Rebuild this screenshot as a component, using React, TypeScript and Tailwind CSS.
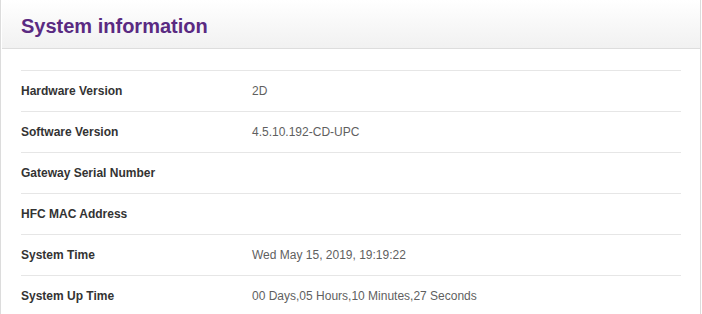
import React from 'react';

const rows: { label: string; value: string }[] = [
  { label: 'Hardware Version', value: '2D' },
  { label: 'Software Version', value: '4.5.10.192-CD-UPC' },
  { label: 'Gateway Serial Number', value: '' },
  { label: 'HFC MAC Address', value: '' },
  { label: 'System Time', value: 'Wed May 15, 2019, 19:19:22' },
  { label: 'System Up Time', value: '00 Days,05 Hours,10 Minutes,27 Seconds' },
];

export default function App() {
  return (
    <div className="w-[702px] h-[314px] bg-white overflow-hidden" style={{ fontFamily: '"Liberation Sans", Arial, sans-serif' }}>
      <div className="w-[701px] h-full border-l border-r border-[#dcdcdc] pl-px">
        {/* Header */}
        <div className="h-[49px] bg-gradient-to-b from-white to-[#f1f1f1] border-b border-[#dddddd] flex items-center pl-[19px]">
          <h1 className="text-[20px] font-bold text-[#5a2a82] leading-none pt-[3px]">System information</h1>
        </div>

        {/* Rows */}
        <div className="pt-[21px] pl-[19px] pr-[19px]">
          {rows.map((r) => (
            <div key={r.label} className="h-[41px] border-t border-[#e6e6e6] flex items-center text-[12px]">
              <div className="w-[231px] font-bold text-[#333333]">{r.label}</div>
              <div className="text-[#5f5f5f]">{r.value}</div>
            </div>
          ))}
        </div>
      </div>
    </div>
  );
}
